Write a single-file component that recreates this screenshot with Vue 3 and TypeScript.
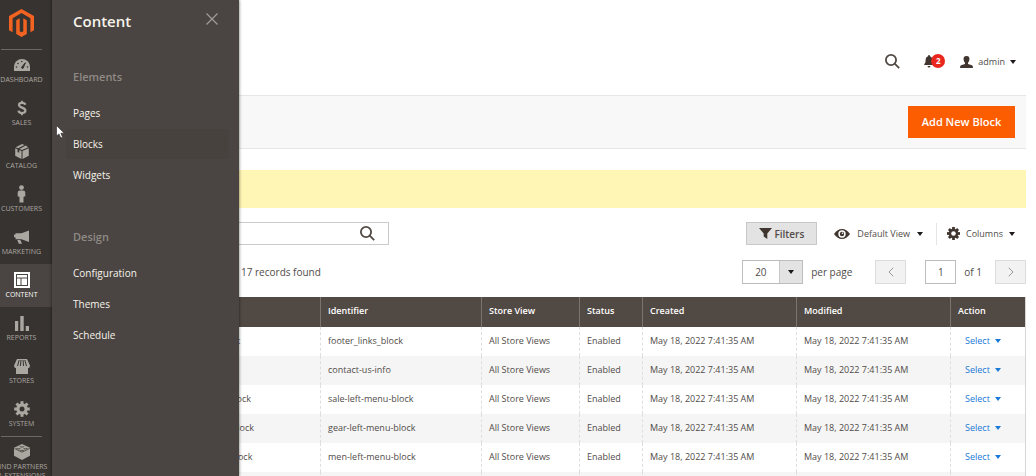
<script setup lang="ts">
import { ref } from 'vue'

interface NavItem {
  id: string
  label: string
}

interface BlockRow {
  title: string
  identifier: string
}

const navItems: NavItem[] = [
  { id: 'dashboard', label: 'Dashboard' },
  { id: 'sales', label: 'Sales' },
  { id: 'catalog', label: 'Catalog' },
  { id: 'customers', label: 'Customers' },
  { id: 'marketing', label: 'Marketing' },
  { id: 'content', label: 'Content' },
  { id: 'reports', label: 'Reports' },
  { id: 'stores', label: 'Stores' },
  { id: 'system', label: 'System' },
  { id: 'partners', label: 'Find Partners & Extensions' },
]

const groups = [
  { title: 'Elements', links: ['Pages', 'Blocks', 'Widgets'] },
  { title: 'Design', links: ['Configuration', 'Themes', 'Schedule'] },
]

const rows: BlockRow[] = [
  { title: 'Footer Links Block', identifier: 'footer_links_block' },
  { title: 'Contact us info', identifier: 'contact-us-info' },
  { title: 'Sale Left Menu Block', identifier: 'sale-left-menu-block' },
  { title: 'Gear Left Menu Block', identifier: 'gear-left-menu-block' },
  { title: 'Men Left Menu Block', identifier: 'men-left-menu-block' },
  { title: 'Women Left Menu Block', identifier: 'women-left-menu-block' },
]

const stamp = 'May 18, 2022 7:41:35 AM'
const active = ref('content')
const hovered = ref('Blocks')
const perPage = ref('20')
const page = ref('1')
const keyword = ref('')
</script>

<template>
  <div class="app">
    <aside class="sidebar">
      <a class="logo" href="#" aria-label="Magento Admin">
        <svg width="25" height="28" viewBox="0 0 25 28" fill="#f26322">
          <path d="M12.500 0L0 7.100V21.200L3.600 23.200V9.200L12.500 4.100L21.400 9.200V23.200L25 21.200V7.100Z" />
          <path d="M7.200 11.200L10.700 9.200V22.200L12.500 23.300L14.300 22.200V9.200L17.800 11.200V24.900L12.500 28L7.200 24.900Z" />
        </svg>
      </a>
      <nav class="nav" aria-label="Main">
        <a
          v-for="item in navItems"
          :key="item.id"
          href="#"
          class="nav-item"
          :class="[item.id, { active: item.id === active }]"
          @click.prevent="active = item.id"
        >
          <span class="nav-icon">
            <svg v-if="item.id === 'dashboard'" width="16" height="12" viewBox="0 0 16 12">
              <path fill="currentColor" d="M0 12V8A8 8 0 0 1 16 8V12Z" />
              <path d="M7.300 8.600L11.400 3.700L9 9.500Z" fill="#373330" stroke="#373330" />
              <g fill="#373330"><circle cx="2.500" cy="8" r=".8" /><circle cx="4" cy="4.500" r=".8" /><circle cx="7.800" cy="2.500" r=".8" /><circle cx="13.500" cy="8" r=".8" /></g>
            </svg>
            <svg v-else-if="item.id === 'sales'" width="10" height="16" viewBox="0 0 10 16" fill="none" stroke="currentColor">
              <path d="M8.300 4.800C7.800 2.200 2 2.100 2 5C2 8 8.400 7.300 8.400 10.600C8.400 13.900 1.900 13.900 1.500 10.700" stroke-width="2.200" />
              <path d="M5 .8V3.200M5 12.500V15.200" stroke-width="1.800" />
            </svg>
            <svg v-else-if="item.id === 'catalog'" width="14" height="15" viewBox="0 0 14 15" fill="currentColor">
              <path d="M7 0L9.500 1L3 4.200L.7 3.200ZM10.700 1.500L13.300 3.200L7 6.100L4.500 5ZM.2 4.300L2.500 5.300V8L4.300 8.800V6.100L6.500 7.100V15L.2 11.800ZM13.800 4.300V11.800L7.500 15V7.100Z" />
            </svg>
            <svg v-else-if="item.id === 'customers'" width="9" height="18" viewBox="0 0 9 18" fill="currentColor">
              <circle cx="4.500" cy="2.600" r="2.400" />
              <path d="M2.800 5.500H6.200Q8.200 5.500 8.300 7.500V11.500H7.200L6.500 12V17.500H2.500V12L1.800 11.500H.7V7.500Q.8 5.500 2.800 5.500Z" />
            </svg>
            <svg v-else-if="item.id === 'marketing'" width="16" height="14" viewBox="0 0 16 14" fill="currentColor">
              <path d="M15 .5V12L7.500 9.200H1.500V7.300H0V4.500H1.500V3.300H7.500ZM3.300 10H6.300L8 13.700H4.800Z" />
            </svg>
            <svg v-else-if="item.id === 'content'" width="16" height="16" viewBox="0 0 16 16" fill="currentColor">
              <path fill-rule="evenodd" d="M0 0H16V16H0ZM2 2V14H14V2ZM3 3H13V5.500H3ZM3 6.500H6.500V13H3ZM7.500 6.500H13V13H7.500Z" />
            </svg>
            <svg v-else-if="item.id === 'reports'" width="14" height="15" viewBox="0 0 14 15" fill="currentColor">
              <path d="M0 5H3.200V15H0ZM5.300 0H8.700V15H5.300ZM10.700 10H14V15H10.700Z" />
            </svg>
            <svg v-else-if="item.id === 'stores'" width="16" height="15" viewBox="0 0 16 15">
              <path fill="currentColor" d="M3 0H13L16 6.500Q16 9 14 9.200V15H2V9.200Q0 9 0 6.500Z" />
              <path d="M5.200 1L3.500 7M7 1L6.400 7M9 1L9.600 7M10.800 1L12.500 7" stroke="#373330" />
            </svg>
            <svg v-else-if="item.id === 'system'" width="16" height="16" viewBox="-8 -8 16 16">
              <g fill="currentColor">
                <rect v-for="n in 4" :key="n" x="-1.500" y="-7.800" width="3" height="15.600" :transform="`rotate(${n * 45})`" />
                <circle r="5.700" />
              </g>
              <circle r="2.500" fill="#373330" />
            </svg>
            <svg v-else width="16" height="16" viewBox="0 0 16 16">
              <path fill="currentColor" d="M8 0L16 3.800V11.800L8 16L0 11.800V3.800Z" />
              <path d="M.3 4.400L8 8.200L15.700 4.400" fill="none" stroke="#373330" stroke-width=".7" />
              <g fill="none" stroke="#373330" stroke-width=".8">
                <path d="M6 2.200A2 .9 0 0 0 10 2.200M2.400 4A2 .9 0 0 0 6.400 4M9.600 4A2 .9 0 0 0 13.600 4M6 5.800A2 .9 0 0 0 10 5.800" />
              </g>
            </svg>
          </span>
          <span class="nav-label">{{ item.label }}</span>
        </a>
      </nav>
    </aside>

    <section class="flyout" aria-label="Content menu">
      <header class="flyout-head">
        <h2>Content</h2>
        <button type="button" class="close" aria-label="Close menu">
          <svg width="12" height="12" viewBox="0 0 12 12" stroke="currentColor" stroke-width="1.200">
            <path d="M.5 .5L11.500 11.500M11.500 .5L.5 11.500" />
          </svg>
        </button>
      </header>
      <div v-for="group in groups" :key="group.title" class="group">
        <h3>{{ group.title }}</h3>
        <ul>
          <li v-for="link in group.links" :key="link">
            <a href="#" :class="{ hovered: link === hovered }" @mouseenter="hovered = link">{{ link }}</a>
          </li>
        </ul>
      </div>
    </section>

    <main class="page">
      <header class="topbar">
        <button type="button" class="plain" aria-label="Search">
          <svg class="lens" width="15" height="15" viewBox="0 0 15 15"><circle cx="6" cy="6" r="5.100" /><path d="M9.700 9.700L14.200 14.200" /></svg>
        </button>
        <button type="button" class="plain bell" aria-label="Notifications">
          <svg width="10" height="13" viewBox="0 0 10 13" fill="#41362f">
            <path d="M5 0Q6 0 6 1.200C8.500 2 8.300 4.500 8.500 7L10 10H0L1.500 7C1.700 4.500 1.500 2 4 1.200Q4 0 5 0ZM3.500 11H6.500Q6.300 12.600 5 12.600Q3.700 12.600 3.500 11Z" />
          </svg>
          <span class="badge">2</span>
        </button>
        <button type="button" class="plain account">
          <svg width="13" height="12" viewBox="0 0 13 12" fill="#41362f">
            <path d="M6.500 0C9 0 9.600 1.600 9.400 3.500C9.200 5.400 8.500 6 8 6.800V8L12 9.300Q13 9.800 13 12H0Q0 9.800 1 9.300L5 8V6.800C4.500 6 3.800 5.400 3.600 3.500C3.400 1.600 4 0 6.500 0Z" />
          </svg>
          <span>admin</span>
          <i class="caret" />
        </button>
      </header>

      <div class="actions">
        <button type="button" class="primary">Add New Block</button>
      </div>

      <div class="notice" role="status"></div>

      <div class="tools">
        <div class="search">
          <input v-model="keyword" type="text" aria-label="Search by keyword" />
          <button type="button" class="plain" aria-label="Run search">
            <svg class="lens" width="15" height="15" viewBox="0 0 15 15"><circle cx="6" cy="6" r="5.100" /><path d="M9.700 9.700L14.200 14.200" /></svg>
          </button>
        </div>
        <div class="tool-buttons">
          <button type="button" class="filters">
            <svg width="13" height="11" viewBox="0 0 13 11" fill="#41362f"><path d="M0 0H13L8.300 5.500V11L4.700 8.500V5.500Z" /></svg>
            Filters
          </button>
          <button type="button" class="plain view">
            <svg width="16" height="10" viewBox="0 0 16 10">
              <path fill="#41362f" d="M0 5Q3.500 0 8 0T16 5Q12.500 10 8 10T0 5Z" />
              <circle cx="8" cy="5" r="3.700" fill="#fff" />
              <circle cx="8" cy="5" r="2.200" fill="#41362f" />
              <circle cx="8.500" cy="4.300" r=".8" fill="#fff" />
            </svg>
            <span>Default View</span>
            <i class="caret" />
          </button>
          <button type="button" class="plain columns">
            <svg width="13" height="13" viewBox="-8 -8 16 16">
              <g fill="#41362f">
                <rect v-for="n in 4" :key="n" x="-1.700" y="-8" width="3.400" height="16" :transform="`rotate(${n * 45})`" />
                <circle r="5.900" />
              </g>
              <circle r="2.800" fill="#fff" />
            </svg>
            <span>Columns</span>
            <i class="caret" />
          </button>
        </div>
      </div>

      <div class="pager-row">
        <span class="found">17 records found</span>
        <div class="pager">
          <span class="select">
            <select id="per-page" v-model="perPage">
              <option>20</option>
              <option>30</option>
              <option>50</option>
            </select>
            <span class="arrow"><i class="caret" /></span>
          </span>
          <label class="per-page" for="per-page">per page</label>
          <button type="button" class="step" aria-label="Previous page" disabled>
            <svg width="6" height="10" viewBox="0 0 6 10"><path d="M5.300 .7L1 5L5.300 9.300" /></svg>
          </button>
          <input id="page" v-model="page" class="current" type="text" />
          <label class="of" for="page">of 1</label>
          <button type="button" class="step" aria-label="Next page" disabled>
            <svg width="6" height="10" viewBox="0 0 6 10"><path d="M.7 .7L5 5L.7 9.300" /></svg>
          </button>
        </div>
      </div>

      <table class="grid">
        <colgroup>
          <col class="c-title" />
          <col />
          <col class="c-store" />
          <col class="c-status" />
          <col class="c-date" />
          <col class="c-date" />
          <col class="c-action" />
        </colgroup>
        <thead>
          <tr>
            <th>Title</th>
            <th>Identifier</th>
            <th>Store View</th>
            <th>Status</th>
            <th>Created</th>
            <th>Modified</th>
            <th>Action</th>
          </tr>
        </thead>
        <tbody>
          <tr v-for="row in rows" :key="row.identifier">
            <td>{{ row.title }}</td>
            <td>{{ row.identifier }}</td>
            <td>All Store Views</td>
            <td>Enabled</td>
            <td>{{ stamp }}</td>
            <td>{{ stamp }}</td>
            <td><button type="button" class="plain pick">Select <i class="caret" /></button></td>
          </tr>
        </tbody>
      </table>
    </main>

    <svg class="pointer" width="9" height="14" viewBox="0 0 9 14">
      <path d="M.5 .5V11L3 8.900L4.800 13L6.600 12.200L4.900 8.200H8.300Z" fill="#fff" stroke="#222" stroke-width=".6" />
    </svg>
  </div>
</template>

<style>
body {
  background: #fff;
}
</style>

<style scoped>
.app {
  position: relative;
  display: flex;
  height: 100vh;
  overflow: hidden;
  font-family: "Open Sans", "Noto Sans", sans-serif;
  font-size: 10px;
  line-height: 14px;
  color: #514c49;
}
.app * {
  box-sizing: border-box;
}
button,
input,
select {
  font: inherit;
  color: inherit;
}
a {
  color: inherit;
  text-decoration: none;
}
.plain {
  display: flex;
  align-items: center;
  border: 0;
  padding: 0;
  background: none;
}
.caret {
  flex: none;
  border: 3px solid transparent;
  border-top: 4px solid #1d1a18;
  border-bottom: 0;
}
.lens {
  fill: none;
  stroke: #514943;
  stroke-width: 1.8;
}

.sidebar {
  flex: none;
  width: 52px;
  background: #373330;
  color: #aaa6a0;
}
.logo {
  display: flex;
  justify-content: center;
  width: 43px;
  height: 49px;
  padding-top: 9px;
}
.nav-item {
  display: flex;
  flex-direction: column;
  align-items: center;
  height: 43px;
  padding: 7px 9px 0 0;
  font-size: 7px;
  line-height: 9px;
  text-align: center;
  text-transform: uppercase;
}
.nav-icon {
  display: flex;
  flex: none;
  align-items: center;
  height: 18px;
  margin-bottom: 1px;
}
.nav-label {
  width: 56px;
}
.nav-item.active {
  background: #4a4542;
  color: #fff;
}
.nav-item.dashboard,
.nav-item.partners {
  background: linear-gradient(#6b6763, #6b6763) 1px 0 / 41px 1px no-repeat;
}

.flyout {
  position: absolute;
  z-index: 2;
  top: 0;
  bottom: 0;
  left: 52px;
  width: 187px;
  padding: 10px 10px 0 14px;
  background: #4a4542;
  box-shadow: 0 0 3px rgba(0, 0, 0, 0.6);
  color: #f7f3eb;
}
.flyout-head {
  display: flex;
  justify-content: space-between;
  align-items: flex-start;
  height: 22px;
  padding: 0 11px 0 7px;
}
h2,
h3,
ul {
  margin: 0;
  padding: 0;
  list-style: none;
}
h2 {
  font-size: 15px;
  line-height: 22px;
  font-weight: 600;
}
.close {
  display: flex;
  padding: 3px 0;
  border: 0;
  background: none;
  color: #a19c97;
}
.group {
  padding-top: 37px;
}
.group + .group {
  padding-top: 38px;
}
h3 {
  padding-left: 7px;
  margin-bottom: 13px;
  font-size: 11px;
  line-height: 16px;
  font-weight: 600;
  color: #8f8a85;
}
li a {
  display: block;
  margin-bottom: 1px;
  padding: 8px 7px;
  font-weight: 500;
}
li a.hovered {
  background: #47423e;
}

.page {
  flex: 1;
  min-width: 0;
  margin-right: 10px;
}
.topbar {
  display: flex;
  justify-content: flex-end;
  align-items: center;
  height: 95px;
  padding: 28px 10px 0 0;
}
.bell {
  margin-left: 24px;
}
.badge {
  width: 14px;
  height: 14px;
  margin: 0 0 2px -3px;
  border-radius: 50%;
  background: #e9271d;
  color: #fff;
  font-size: 8px;
  line-height: 14px;
  font-weight: 700;
  text-align: center;
}
.account {
  gap: 5px;
  margin-left: 15px;
  font-size: 9px;
}
.actions {
  display: flex;
  justify-content: flex-end;
  align-items: center;
  height: 54px;
  padding-right: 11px;
  border: solid #e6e6e6;
  border-width: 1px 0;
  background: #f8f8f8;
}
.primary {
  min-width: 107px;
  height: 32px;
  padding: 0 12px;
  border: 0;
  background: #fd5d01;
  color: #fff;
  font-size: 11px;
  font-weight: 600;
}
.notice {
  height: 38px;
  margin-top: 21px;
  background: #fff6b5;
}

.tools,
.pager-row {
  display: flex;
  justify-content: space-between;
  align-items: center;
  margin-left: 20px;
}
.tools {
  height: 23px;
  margin-top: 14px;
}
.search {
  display: flex;
  width: 317px;
  height: 23px;
  border: 1px solid #cbcbcb;
}
.search input {
  flex: 1;
  min-width: 0;
  border: 0;
  padding: 0 8px;
  background: none;
}
.search button {
  padding-right: 13px;
}
.tool-buttons {
  display: flex;
  align-items: center;
  font-size: 9px;
}
.filters {
  display: flex;
  align-items: center;
  justify-content: center;
  gap: 2px;
  width: 71px;
  height: 23px;
  padding: 0;
  border: 1px solid #c8c8c8;
  background: #e3e3e3;
  font-size: 10px;
  font-weight: 600;
}
.view {
  gap: 7px;
  padding: 0 13px 0 17px;
}
.columns {
  gap: 6px;
  height: 22px;
  padding: 0 11px 0 10px;
  border-left: 1px solid #e4e4e4;
}

.pager-row {
  height: 24px;
  margin-top: 15px;
}
.found {
  margin-left: 169px;
}
.pager {
  display: flex;
  align-items: center;
}
.select {
  display: flex;
  width: 61px;
  height: 24px;
  border: 1px solid #bdbdbd;
}
.select select {
  flex: 1;
  min-width: 0;
  padding: 0 0 0 12px;
  border: 0;
  appearance: none;
  background: none;
}
.arrow {
  display: flex;
  align-items: center;
  justify-content: center;
  width: 23px;
  border-left: 1px solid #c8c8c8;
  background: #e3e3e3;
}
.per-page {
  margin: 0 23px 0 8px;
}
.step {
  display: flex;
  align-items: center;
  justify-content: center;
  width: 31px;
  height: 24px;
  padding: 0;
  border: 1px solid #dcdcdc;
  background: #f2f2f2;
}
.step svg {
  fill: none;
  stroke: #9b9793;
}
.current {
  width: 31px;
  height: 24px;
  margin-left: 19px;
  padding: 0;
  border: 1px solid #bdbdbd;
  text-align: center;
}
.of {
  margin: 0 13px 0 8px;
}

.grid {
  width: calc(100% - 104px);
  margin: 13px 0 0 104px;
  table-layout: fixed;
  border-collapse: collapse;
  border-right: 1px solid #d6d6d6;
  font-size: 9px;
}
.c-title {
  width: 164px;
}
.c-store {
  width: 98px;
}
.c-status {
  width: 63px;
}
.c-date {
  width: 154px;
}
.c-action {
  width: 75px;
}
th,
td {
  height: 29px;
  padding: 0 7px 2px;
  text-align: left;
  white-space: nowrap;
}
th {
  height: 30px;
  border-left: 1px solid #7b736c;
  background: #514943;
  color: #fff;
  font-weight: 600;
}
td {
  border-left: 1px dashed #dedede;
}
tbody tr:nth-child(even) {
  background: #f5f5f5;
}
.pick {
  gap: 5px;
  margin-left: 7px;
  color: #1979d6;
}
.pick .caret {
  border-top-color: #1979d6;
}
.pointer {
  position: absolute;
  z-index: 3;
  top: 125px;
  left: 56px;
}
</style>
